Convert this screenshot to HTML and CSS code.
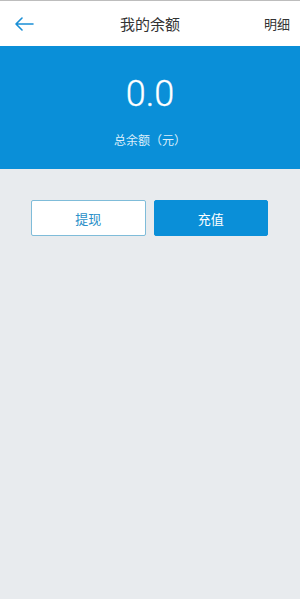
FILE: index.html
```html
<!DOCTYPE html>
<html lang="zh">
<head>
<meta charset="utf-8">
<link rel="stylesheet" href="styles.css">
</head>
<body>
<div class="topline"></div>
<header class="nav">
  <svg class="back" width="20" height="14" viewBox="0 0 20 14"><path d="M19 7H2M8 1L2 7l6 6" fill="none" stroke="#1a8fd6" stroke-width="1.6" stroke-linecap="round" stroke-linejoin="round"/></svg>
  <div class="title">我的余额</div>
  <div class="detail">明细</div>
</header>
<section class="balance">
  <div class="amount">0.0</div>
  <div class="label">总余额（元）</div>
</section>
<div class="actions">
  <button class="btn btn-outline">提现</button>
  <button class="btn btn-fill">充值</button>
</div>
</body>
</html>
```
FILE: styles.css
```css
html, body {
  margin: 0;
  padding: 0;
  height: 100%;
}
body {
  background: #e8ebee;
  font-family: "Noto Sans CJK SC", "Noto Sans", sans-serif;
}
.topline {
  height: 1px;
  background: #bdbdbd;
}
.nav {
  height: 45px;
  background: #fff;
  display: flex;
  align-items: center;
  position: relative;
  padding: 0 10px 0 14px;
}
.back {
  display: block;
}
.title {
  position: absolute;
  left: 0;
  right: 0;
  text-align: center;
  font-size: 15px;
  color: #333;
  pointer-events: none;
}
.detail {
  margin-left: auto;
  font-size: 13px;
  color: #333;
}
.balance {
  height: 123px;
  background: #0a8fd8;
  color: #fff;
  text-align: center;
  box-sizing: border-box;
  padding-top: 28px;
}
.amount {
  font-family: Roboto, sans-serif;
  font-weight: 300;
  font-size: 36px;
  line-height: 40px;
  -webkit-text-stroke: 0.3px #fff;
}
.label {
  margin-top: 18px;
  font-size: 12px;
  line-height: 16px;
  color: #dceefa;
}
.actions {
  display: flex;
  gap: 8px;
  padding: 31px 32px 0 31px;
}
.btn {
  flex: 1;
  height: 36px;
  border-radius: 2px;
  font-family: "Noto Sans CJK SC", sans-serif;
  font-size: 13px;
  padding: 0;
}
.btn-outline {
  background: #fff;
  border: 1px solid #7fbcd9;
  color: #2a8fc8;
}
.btn-fill {
  background: #0a8fd8;
  border: 1px solid #0a8fd8;
  color: #fff;
}
```
